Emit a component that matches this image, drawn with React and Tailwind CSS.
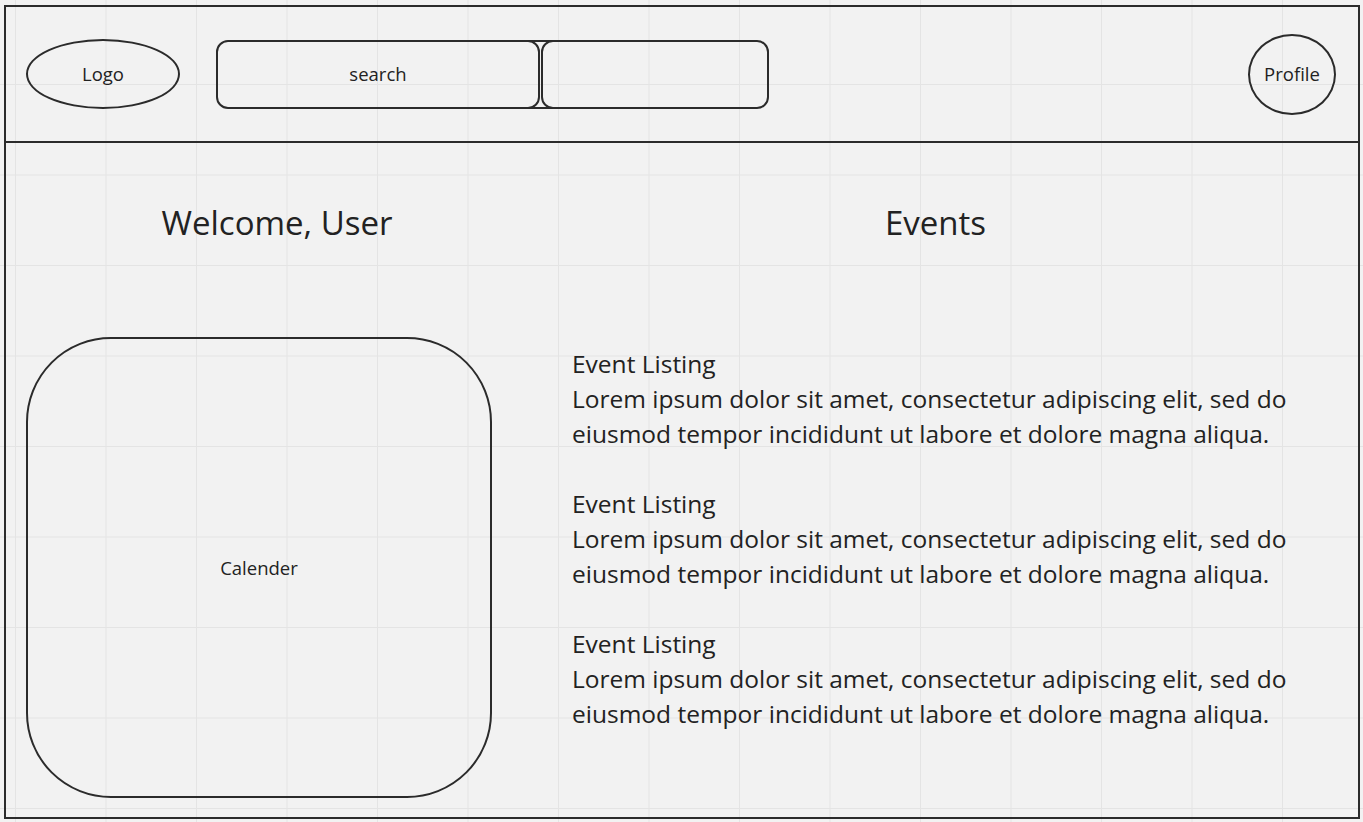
import React from 'react';

const lorem1 = "Lorem ipsum dolor sit amet, consectetur adipiscing elit, sed do";
const lorem2 = "eiusmod tempor incididunt ut labore et dolore magna aliqua.";

// One event entry: title plus two lines of body text
const EventListing = () => (
  <div className="mb-[35px] whitespace-nowrap">
    <div>Event Listing</div>
    <div>{lorem1}</div>
    <div>{lorem2}</div>
  </div>
);

export default function App() {
  return (
    <div
      className="min-h-screen w-full bg-[#f2f2f2] bg-[image:linear-gradient(to_right,#e4e4e4_1px,transparent_1px),linear-gradient(to_bottom,#e4e4e4_1px,transparent_1px)] bg-[size:90.5px_90.5px] bg-[position:15px_84px] pl-[4px] pt-[5px] text-[#222] font-['Open_Sans',sans-serif]"
    >
      <div className="w-[1356px] h-[814px] border-2 border-[#2b2b2b] flex flex-col">
        {/* Header */}
        <header className="h-[136px] shrink-0 border-b-2 border-[#2b2b2b] flex items-center">
          <div className="ml-[20px] w-[154px] h-[70px] rounded-[50%] border-2 border-[#2b2b2b] flex items-center justify-center text-[18.5px]">
            Logo
          </div>

          <div className="relative ml-[36px] flex gap-[1px] h-[69px]">
            <div className="absolute left-[12px] right-[12px] top-0 bottom-0 border-y-2 border-[#2b2b2b]" />
            <div className="relative w-[324px] h-full rounded-[12px] border-2 border-[#2b2b2b] flex items-center justify-center text-[18.5px]">
              search
            </div>
            <div className="relative w-[228px] h-full rounded-[12px] border-2 border-[#2b2b2b]" />
          </div>

          <div className="ml-auto mr-[22px] w-[88px] h-[81px] rounded-[50%] border-2 border-[#2b2b2b] flex items-center justify-center text-[18.5px]">
            Profile
          </div>
        </header>

        {/* Main */}
        <main className="flex pt-[58px]">
          <section className="ml-[20px] w-[502px]">
            <h1 className="text-center text-[33px] leading-[44px]">Welcome, User</h1>
            <div className="mt-[92px] w-[466px] h-[461px] rounded-[85px] border-2 border-[#2b2b2b] flex items-center justify-center text-[18.5px]">
              Calender
            </div>
          </section>

          <section className="ml-[44px] w-[727px]">
            <h2 className="text-center text-[33px] leading-[44px]">Events</h2>
            <div className="mt-[101px] text-[24.5px] leading-[35px]">
              <EventListing />
              <EventListing />
              <EventListing />
            </div>
          </section>
        </main>
      </div>
    </div>
  );
}
